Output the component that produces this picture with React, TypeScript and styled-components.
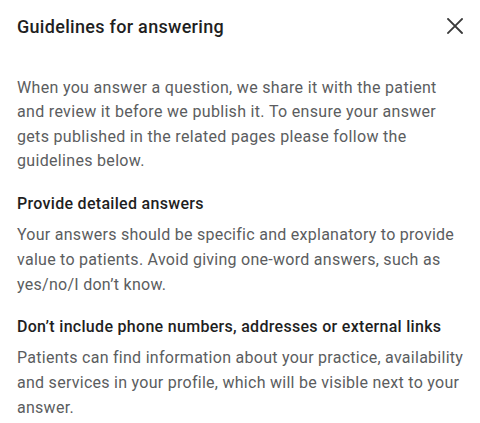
import React from "react";
import styled, { createGlobalStyle } from "styled-components";

const GlobalStyle = createGlobalStyle`
  html, body {
    margin: 0;
    padding: 0;
    background: #fff;
    font-family: Roboto, "Noto Sans", Arial, sans-serif;
  }
`;

const sections = [
  {
    title: "Provide detailed answers",
    text: "Your answers should be specific and explanatory to provide value to patients. Avoid giving one-word answers, such as yes/no/I don’t know.",
  },
  {
    title: "Don’t include phone numbers, addresses or external links",
    text: "Patients can find information about your practice, availability and services in your profile, which will be visible next to your answer.",
  },
];

const App = () => {
  return (
    <>
      <GlobalStyle />
      <Modal>
        <Header>
          <Title>Guidelines for answering</Title>
          <CloseButton aria-label="Close">
            <svg width="16" height="16" viewBox="0 0 16 16">
              <path
                d="M1 1L15 15M15 1L1 15"
                stroke="#3a3a3a"
                strokeWidth="1.8"
                strokeLinecap="square"
              />
            </svg>
          </CloseButton>
        </Header>
        <Body>
          <Paragraph $lead>
            When you answer a question, we share it with the patient and review
            it before we publish it. To ensure your answer gets published in the
            related pages please follow the guidelines below.
          </Paragraph>
          {sections.map((s, i) => (
            <Section key={i}>
              <SectionTitle>{s.title}</SectionTitle>
              <Paragraph>{s.text}</Paragraph>
            </Section>
          ))}
        </Body>
      </Modal>
    </>
  );
};

const Modal = styled.div`
  width: 480px;
  height: 423px;
  box-sizing: border-box;
  background: #fff;
  overflow: hidden;
`;

const Header = styled.div`
  display: flex;
  align-items: center;
  justify-content: space-between;
  height: 52px;
  padding: 0 17px 0 17px;
`;

const Title = styled.h2`
  margin: 0;
  font-size: 18px;
  font-weight: 500;
  letter-spacing: 0.3px;
  color: #1f1f1f;
`;

const CloseButton = styled.button`
  display: flex;
  align-items: center;
  justify-content: center;
  border: none;
  background: none;
  padding: 0;
  width: 16px;
  height: 16px;
  cursor: pointer;
`;

const Body = styled.div`
  display: flex;
  flex-direction: column;
  gap: 20px;
  padding: 24px 15px 0 17px;
`;

const Section = styled.div`
  display: flex;
  flex-direction: column;
  gap: 8px;
`;

const SectionTitle = styled.h3`
  margin: 0;
  font-size: 16px;
  font-weight: 500;
  line-height: 20px;
  letter-spacing: 0.3px;
  color: #1f1f1f;
`;

const Paragraph = styled.p<{ $lead?: boolean }>`
  margin: 0;
  font-size: 16px;
  line-height: ${(p) => (p.$lead ? "24.4px" : "25px")};
  letter-spacing: ${(p) => (p.$lead ? "0.32px" : "0.27px")};
  color: #5b5d60;
`;

export default App;
